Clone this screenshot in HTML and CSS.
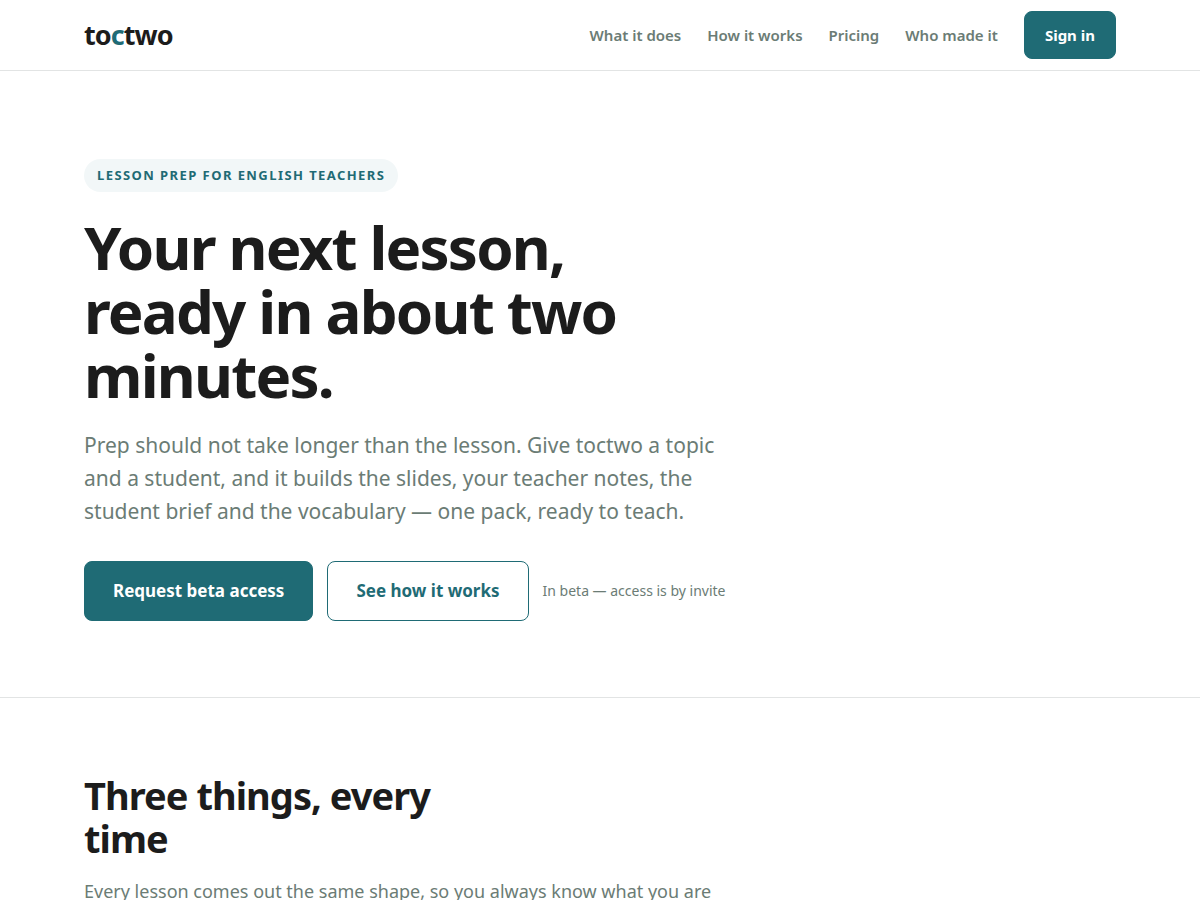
FILE: index.html
```html
<!DOCTYPE html>
<html lang="en">
<head>
<meta charset="utf-8">
<meta name="viewport" content="width=device-width, initial-scale=1">
<title>toctwo</title>
<link rel="stylesheet" href="styles.css">
</head>
<body>
<header class="site-header">
  <div class="wrap header-row">
    <a class="brand" href="#">to<span class="brand-accent">c</span>two</a>
    <nav class="nav">
      <a class="nav-link" href="#what">What it does</a>
      <a class="nav-link" href="#how">How it works</a>
      <a class="nav-link" href="#pricing">Pricing</a>
      <a class="nav-link" href="#who">Who made it</a>
      <a class="btn btn-small btn-primary" href="#signin">Sign in</a>
    </nav>
  </div>
</header>
<main>
  <section class="hero">
    <div class="wrap">
      <span class="eyebrow">Lesson prep for English teachers</span>
      <h1 class="hero-title">Your next lesson, ready in about two minutes.</h1>
      <p class="hero-lead">Prep should not take longer than the lesson. Give toctwo a topic and a student, and it builds the slides, your teacher notes, the student brief and the vocabulary — one pack, ready to teach.</p>
      <div class="actions">
        <a class="btn btn-primary" href="#beta">Request beta access</a>
        <a class="btn btn-outline" href="#how">See how it works</a>
        <span class="actions-note">In beta — access is by invite</span>
      </div>
    </div>
  </section>
  <section class="section" id="what">
    <div class="wrap">
      <h2 class="section-title">Three things, every time</h2>
      <p class="section-lead">Every lesson comes out the same shape, so you always know what you are</p>
    </div>
  </section>
</main>
</body>
</html>
```

FILE: styles.css
```css
* {
  box-sizing: border-box;
}

body {
  margin: 0;
  background: #fff;
  color: #1c1c1c;
  font-family: "Noto Sans", sans-serif;
  font-size: 17px;
  line-height: 1.6;
}

a {
  text-decoration: none;
}

.wrap {
  max-width: 1080px;
  margin: 0 auto;
  padding: 0 24px;
}

.site-header {
  border-bottom: 1px solid #e2e4e4;
}

.header-row {
  display: flex;
  align-items: center;
  justify-content: space-between;
  min-height: 70px;
}

.brand {
  color: #1c1c1c;
  font-size: 27px;
  font-weight: 700;
  letter-spacing: -0.035em;
}

.brand-accent {
  color: #1f6b75;
}

.nav {
  display: flex;
  align-items: center;
  gap: 26px;
}

.nav-link {
  color: #6b7c75;
  font-size: 15px;
  font-weight: 600;
}

.btn {
  display: inline-flex;
  align-items: center;
  justify-content: center;
  min-height: 60px;
  padding: 0 28px;
  border: 1px solid #1f6b75;
  border-radius: 8px;
  font-size: 17px;
  font-weight: 700;
}

.btn-primary {
  background: #1f6b75;
  color: #fff;
}

.btn-outline {
  background: #fff;
  color: #1f6b75;
}

.btn-small {
  min-height: 48px;
  padding: 0 20px;
  font-size: 15px;
}

.hero {
  padding: 88px 0 76px;
  border-bottom: 1px solid #e2e4e4;
}

.eyebrow {
  display: inline-block;
  padding: 6px 13px;
  border-radius: 999px;
  background: #f2f7f8;
  color: #1f6b75;
  font-size: 13px;
  font-weight: 700;
  letter-spacing: 0.11em;
  text-transform: uppercase;
}

.hero-title {
  max-width: 620px;
  margin: 23px 0 22px;
  font-size: 60px;
  font-weight: 700;
  line-height: 64px;
  letter-spacing: -0.03em;
}

.hero-lead {
  max-width: 640px;
  margin: 0 0 33px;
  color: #6b7c75;
  font-size: 21px;
  line-height: 33px;
}

.actions {
  display: flex;
  flex-wrap: wrap;
  align-items: center;
  gap: 14px;
}

.actions-note {
  color: #6b7c75;
  font-size: 14px;
}

.section {
  padding: 76px 0;
}

.section-title {
  max-width: 420px;
  margin: 0 0 17px;
  font-size: 38px;
  font-weight: 700;
  line-height: 43px;
  letter-spacing: -0.025em;
}

.section-lead {
  max-width: 640px;
  margin: 0;
  color: #6b7c75;
  font-size: 18px;
  line-height: 29px;
}
```
